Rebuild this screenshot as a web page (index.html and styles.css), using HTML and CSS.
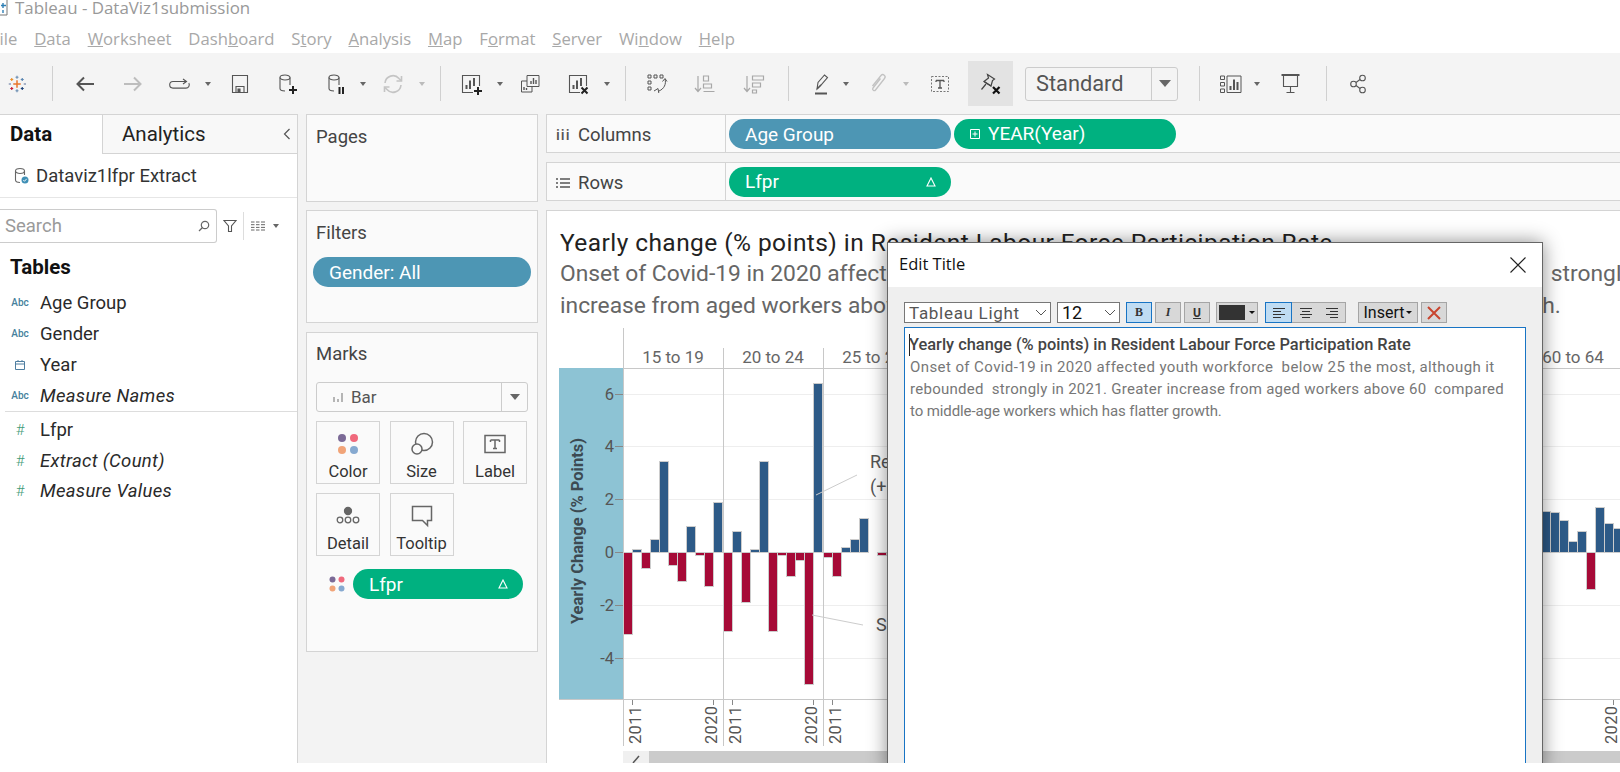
FILE: index.html
```html
<!DOCTYPE html>
<html lang="en">
<head>
    <meta charset="UTF-8">
    <title>Tableau - DataViz1submission</title>
    <link rel="stylesheet" href="styles.css">
</head>
<body>
<div class="app">
    <div class="titlebar">
        <svg class="app-icon" width="10" height="20" viewBox="0 0 10 20"><path d="M-4 2H7V18H-4" fill="#fff" stroke="#777"/><path d="M3 6v5M1 8.5h5M3 13v3" stroke="#2f7fb5" stroke-width="1.4"/></svg>
        <span>Tableau - DataViz1submission</span>
    </div>
    <ul class="menubar">
        <li class="menu-file">File</li>
        <li><u>D</u>ata</li>
        <li><u>W</u>orksheet</li>
        <li>Dash<u>b</u>oard</li>
        <li>S<u>t</u>ory</li>
        <li><u>A</u>nalysis</li>
        <li><u>M</u>ap</li>
        <li>F<u>o</u>rmat</li>
        <li><u>S</u>erver</li>
        <li>Wi<u>n</u>dow</li>
        <li><u>H</u>elp</li>
    </ul>

    <div class="toolbar">
        <div class="tool"><svg class="ico-logo" viewBox="0 0 24 24" fill="none" stroke-width="1.6"><path d="M12 7v10M7 12h10" stroke="#e8762b" stroke-width="2"/><path d="M12 1v4M10 3h4M12 19v4M10 21h4" stroke="#6d8fb3"/><path d="M5 4v4M3 6h4" stroke="#eb912b"/><path d="M19 4v4M17 6h4" stroke="#5b87b2"/><path d="M5 16v4M3 18h4" stroke="#c72037"/><path d="M19 16v4M17 18h4" stroke="#1f447a"/><path d="M1 12h3M21 12h3" stroke="#5b6f99"/></svg></div>
        <div class="tool"><i class="tb-sep"></i></div>
        <div class="tool"><svg class="ico" viewBox="0 0 24 24" fill="none" stroke="#555" stroke-width="2"><path d="M21 12H5M11 5.500 4.500 12l6.500 6.500"/></svg></div>
        <div class="tool"><svg class="ico" viewBox="0 0 24 24" fill="none" stroke="#bdbdbd" stroke-width="2"><path d="M3 12h16M13 5.500l6.500 6.500-6.500 6.500"/></svg></div>
        <div class="tool"><svg class="ico" viewBox="0 0 24 24" fill="none" stroke="#555" stroke-width="1.100"><path d="M19 9.500H6a3.300 3.300 0 0 0 0 6.600h13a3.300 3.300 0 0 0 2.800-5"/><path d="M16 7l3.500 2.500-3.500 2.500"/></svg></div>
        <div class="tool"><i class="caret"></i></div>
        <div class="tool"><svg class="ico" viewBox="0 0 24 24" fill="none" stroke="#555" stroke-width="1.100"><path d="M4.500 3.500h15v17h-15z"/><path d="M8 20.500v-6h8v6"/><path d="M10 17h2v3.500h-2z" fill="#555"/></svg></div>
        <div class="tool"><svg class="ico" viewBox="0 0 24 24" fill="none" stroke="#555" stroke-width="1.100"><ellipse cx="10" cy="5.500" rx="5" ry="2.500"/><path d="M5 5.500v11c0 1.500 2 2.500 5 2.500M15 5.500V13"/><path d="M18 14v8M14 18h8" stroke="#222" stroke-width="2"/></svg></div>
        <div class="tool"><svg class="ico" viewBox="0 0 24 24" fill="none" stroke="#555" stroke-width="1.100"><ellipse cx="10" cy="5.500" rx="5" ry="2.500"/><path d="M5 5.500v11c0 1.500 2 2.500 5 2.500M15 5.500V13"/><path d="M15.500 15v7M19 15v7" stroke="#222" stroke-width="2"/></svg></div>
        <div class="tool"><i class="caret"></i></div>
        <div class="tool"><svg class="ico" viewBox="0 0 24 24" fill="none" stroke="#c4c4c4" stroke-width="1.600"><path d="M4 11a8 8 0 0 1 14-4.500l2 2M20 13a8 8 0 0 1-14 4.500l-2-2"/><path d="M20.500 4v5h-5M3.500 20v-5h5"/></svg></div>
        <div class="tool"><i class="caret caret-off"></i></div>
        <div class="tool"><i class="tb-sep"></i></div>
        <div class="tool"><svg class="ico" viewBox="0 0 24 24" fill="none" stroke="#555" stroke-width="1.100"><path d="M14 20.500H3.500v-17h17V14"/><path d="M7.500 17v-4M11 17V8.500M15 14V6" stroke-width="2"/><path d="M19 15v8M15 19h8" stroke="#222" stroke-width="2"/></svg></div>
        <div class="tool"><i class="caret"></i></div>
        <div class="tool"><svg class="ico" viewBox="0 0 24 24" fill="none" stroke="#555" stroke-width="1"><path d="M9 3.500h12v11H9z" fill="#f4f4f4"/><path d="M9 9H3.500v11H14v-5"/><path d="M13 12V9M15.500 12V6M18 12V8M6 18v-3M8.500 18v-2" stroke-width="1.400"/></svg></div>
        <div class="tool"><svg class="ico" viewBox="0 0 24 24" fill="none" stroke="#555" stroke-width="1.100"><path d="M14 20.500H3.500v-17h17V14"/><path d="M7.500 17v-4M11 17V8.500M15 14V6" stroke-width="2"/><path d="M15.500 15.500l6 6M21.500 15.500l-6 6" stroke="#222" stroke-width="2"/></svg></div>
        <div class="tool"><i class="caret"></i></div>
        <div class="tool"><i class="tb-sep"></i></div>
        <div class="tool"><svg class="ico" viewBox="0 0 24 24" fill="none" stroke="#555" stroke-width="1"><path d="M3 3h3v3H3zM9 3h3v3H9zM15 3h3v3h-3zM3 9h3v3H3zM3 15h3v3H3z"/><path d="M20 7c1.500 5-1 10-6 12M9 19l4-2.500.8 4.500M17.500 9.500l2.500-3 2 3"/></svg></div>
        <div class="tool"><svg class="ico" viewBox="0 0 24 24" fill="none" stroke="#a8a8a8" stroke-width="1.200"><path d="M5 4v15M2 16l3 3.500L8 16"/><path d="M10.500 4h5v5h-5zM10.500 12h8v4h-8zM10.500 19.500h11"/></svg></div>
        <div class="tool"><svg class="ico" viewBox="0 0 24 24" fill="none" stroke="#a8a8a8" stroke-width="1.200"><path d="M5 4v15M2 16l3 3.500L8 16"/><path d="M10.500 4h11v4h-11zM10.500 11h8v4h-8zM10.500 18h4v3h-4z"/></svg></div>
        <div class="tool"><i class="tb-sep"></i></div>
        <div class="tool"><svg class="ico" viewBox="0 0 24 24" fill="none" stroke="#555" stroke-width="1.100"><path d="M8 17l1-6.500L15.500 3l3 2.500-6.500 7.500z"/><path d="M8 17l4-4"/><path d="M6 21.500h12" stroke-width="2"/></svg></div>
        <div class="tool"><i class="caret"></i></div>
        <div class="tool"><svg class="ico" viewBox="0 0 24 24" fill="none" stroke="#c2c2c2" stroke-width="1.300"><path d="M6.500 14 15 3.500c2-2.300 5.500.5 3.500 3L9.500 18c-1.300 1.600-3.800-.3-2.500-2l7.500-9.500"/></svg></div>
        <div class="tool"><i class="caret caret-off"></i></div>
        <div class="tool"><svg class="ico" viewBox="0 0 24 24" fill="none" stroke="#777" stroke-width="1"><path d="M3.500 4.500h17v15h-17z" stroke-dasharray="2 1.500"/><path d="M8 8.500h8M12 8.500V16M10 16h4M8 8.500V10M16 8.500V10" stroke="#555" stroke-width="1.300"/></svg></div>
        <div class="tool"><div class="pin-box"><svg class="ico" viewBox="0 0 24 24" fill="none" stroke="#444" stroke-width="1.200"><path d="M9.500 2.500l7 4.500-2 1.500-1.500 5.500-7-4.500 4.500-3.500z"/><path d="M6 9.500l7 4.500M8 12l-4.500 5.500"/><path d="M15 15l6.500 6.500M21.500 15 15 21.500" stroke="#111" stroke-width="2.200"/></svg></div></div>
        <div class="std-select"><span>Standard</span><b><i class="select-arrow"></i></b></div>
        <div class="tool"><i class="tb-sep"></i></div>
        <div class="tool"><svg class="ico" viewBox="0 0 24 24" fill="none" stroke="#555" stroke-width="1"><path d="M1.500 4h4v3.500h-4zM1.500 10.500h4V14h-4zM1.500 17h4v3.500h-4z"/><path d="M8 4h14v16.500H8z"/><path d="M11.500 18v-4M15 18V7.500M18.500 18V10" stroke-width="2"/></svg></div>
        <div class="tool"><i class="caret"></i></div>
        <div class="tool"><svg class="ico" viewBox="0 0 24 24" fill="none" stroke="#555" stroke-width="1.100"><path d="M1.500 3h18" stroke-width="2"/><path d="M3.500 3.500v11h14v-11M10.500 14.500V20M6.500 20.500h8"/></svg></div>
        <div class="tool"><i class="tb-sep"></i></div>
        <div class="tool"><svg class="ico" viewBox="0 0 24 24" fill="none" stroke="#555" stroke-width="1.100"><circle cx="6.500" cy="12" r="2.800"/><circle cx="15.500" cy="6" r="2.800"/><circle cx="15.500" cy="18" r="2.800"/><path d="M9 10.500l4-3M9 13.500l4 3"/></svg></div>
    </div>

    <div class="workspace">
        <div class="data-panel">
            <div class="tabs">
                <div class="tab-data">Data</div>
                <div class="tab-analytics">Analytics<svg width="8" height="12" viewBox="0 0 8 12" fill="none" stroke="#555" stroke-width="1.200"><path d="M6.500 1 1.500 6l5 5"/></svg></div>
            </div>
            <div class="source">
                <svg width="16" height="18" viewBox="0 0 16 18" fill="none" stroke="#666" stroke-width="1.100"><ellipse cx="6" cy="4" rx="4.500" ry="2.500"/><path d="M1.500 4v9c0 1.500 2 2.500 4.500 2.500M10.500 4v4"/><circle cx="11" cy="13" r="3.500" fill="#3f8fb5" stroke="none"/><path d="M9.300 13l1.200 1.300 2.200-2.500" stroke="#fff" stroke-width=".9"/></svg>
                <span>Dataviz1lfpr Extract</span>
            </div>
            <div class="search-row">
                <div class="search-box"><span>Search</span><svg width="12" height="12" viewBox="0 0 12 12" fill="none" stroke="#666" stroke-width="1.200"><circle cx="7" cy="5" r="3.700"/><path d="M4.500 7.500 1 11"/></svg></div>
                <svg class="search-filter" width="14" height="14" viewBox="0 0 14 14" fill="none" stroke="#555" stroke-width="1.100"><path d="M1 1.500h12L8.500 7v5.500h-3V7z"/></svg>
                <i class="search-sep"></i>
                <svg class="search-list" width="14" height="10" viewBox="0 0 14 10" fill="none" stroke="#666" stroke-width="1"><path d="M0 1h3.500M0 3.700h3.500M0 6.400h3.500M0 9h3.500M5 1h3.500M5 3.700h3.500M5 6.400h3.500M5 9h3.500M10 1h4M10 3.700h4M10 6.400h4M10 9h4"/></svg>
                <i class="caret caret-dark"></i>
            </div>
            <h3 class="tables-head">Tables</h3>
            <ul class="fields">
                <li><span class="f-abc">Abc</span>Age Group</li>
                <li><span class="f-abc">Abc</span>Gender</li>
                <li><span class="f-ico"><svg width="12" height="12" viewBox="0 0 12 12" fill="none" stroke="#4e7ea0"><path d="M1.500 2.500h9v8h-9zM1.500 5h9M4 1v2M8 1v2"/></svg></span>Year</li>
                <li class="f-calc"><span class="f-abc">Abc</span>Measure Names</li>
            </ul>
            <ul class="fields fields-num">
                <li><span class="f-num">#</span>Lfpr</li>
                <li class="f-calc"><span class="f-num">#</span>Extract (Count)</li>
                <li class="f-calc"><span class="f-num">#</span>Measure Values</li>
            </ul>
        </div>

        <div class="cards">
            <div class="card card-pages"><div class="card-title">Pages</div></div>
            <div class="card card-filters">
                <div class="card-title">Filters</div>
                <div class="pill pill-blue filter-pill">Gender: All</div>
            </div>
            <div class="card card-marks">
                <div class="card-title">Marks</div>
                <div class="mark-select">
                    <svg width="12" height="10" viewBox="0 0 12 10" fill="#b5b5b5"><path d="M1 5h2v5H1zM5 7h2v3H5zM9 1h2v9H9z"/></svg>
                    <span>Bar</span>
                    <b><i class="select-arrow"></i></b>
                </div>
                <div class="mark-grid">
                    <div class="mark-btn">
                        <svg width="24" height="24" viewBox="0 0 24 24"><circle cx="6" cy="6" r="4" fill="#7b6a96"/><circle cx="18" cy="6" r="4" fill="#f0697c"/><circle cx="6" cy="18" r="4" fill="#f1a478"/><circle cx="18" cy="18" r="4" fill="#86a9d0"/></svg>
                        <span>Color</span>
                    </div>
                    <div class="mark-btn">
                        <svg width="24" height="24" viewBox="0 0 24 24" fill="none" stroke="#666" stroke-width="1.500"><circle cx="14" cy="10" r="8.500"/><circle cx="7" cy="17" r="5" fill="#fafafa"/></svg>
                        <span>Size</span>
                    </div>
                    <div class="mark-btn">
                        <svg width="24" height="24" viewBox="0 0 24 24" fill="none" stroke="#666" stroke-width="1.500"><path d="M2 3.500h20v17H2z"/><path d="M7.500 8h9M12 8v8.500M10 16.500h4M7.500 8v2M16.500 8v2"/></svg>
                        <span>Label</span>
                    </div>
                    <div class="mark-btn">
                        <svg width="24" height="24" viewBox="0 0 24 24" fill="none" stroke="#666" stroke-width="1.300"><circle cx="12" cy="7" r="3.500" fill="#666"/><circle cx="4" cy="16" r="2.800"/><circle cx="12" cy="16" r="2.800"/><circle cx="20" cy="16" r="2.800"/></svg>
                        <span>Detail</span>
                    </div>
                    <div class="mark-btn">
                        <svg width="24" height="24" viewBox="0 0 24 24" fill="none" stroke="#666" stroke-width="1.500"><path d="M2.500 2.500h19v14h-4v5l-5-5h-10z"/></svg>
                        <span>Tooltip</span>
                    </div>
                </div>
                <div class="mark-pill-row">
                    <svg width="16" height="16" viewBox="0 0 16 16"><circle cx="3.500" cy="3.500" r="3" fill="#7b6a96"/><circle cx="12.500" cy="3.500" r="3" fill="#f0697c"/><circle cx="3.500" cy="12.500" r="3" fill="#f1a478"/><circle cx="12.500" cy="12.500" r="3" fill="#86a9d0"/></svg>
                    <div class="pill pill-green pill-delta">Lfpr<svg width="10" height="10" viewBox="0 0 10 10" fill="none" stroke="#fff" stroke-width="1.100"><path d="M5 1 9 9H1z"/></svg></div>
                </div>
            </div>
        </div>

        <div class="main">
            <div class="shelf">
                <div class="shelf-label"><span class="shelf-ico">iii</span>Columns</div>
                <div class="shelf-pills">
                    <div class="pill pill-blue pill-age">Age Group</div>
                    <div class="pill pill-green pill-year"><svg width="10" height="10" viewBox="0 0 10 10" fill="none" stroke="#fff"><path d="M.5.500h9v9h-9zM5 2.500v5M2.500 5h5"/></svg>YEAR(Year)</div>
                </div>
            </div>
            <div class="shelf">
                <div class="shelf-label"><svg class="shelf-svg" width="14" height="12" viewBox="0 0 14 12" stroke="#555" stroke-width="1.500"><path d="M0 2h2M4 2h10M0 6h2M4 6h10M0 10h2M4 10h10"/></svg>Rows</div>
                <div class="shelf-pills">
                    <div class="pill pill-green pill-delta pill-age">Lfpr<svg width="10" height="10" viewBox="0 0 10 10" fill="none" stroke="#fff" stroke-width="1.100"><path d="M5 1 9 9H1z"/></svg></div>
                </div>
            </div>
            <div class="viz">
                <div class="viz-head">
                    <div class="viz-title">Yearly change (% points) in Resident Labour Force Participation Rate</div>
                    <div class="viz-sub">Onset of Covid-19 in 2020 affected youth workforce  <span class="sub-wide">below 25 the most, although it rebounded</span>  strongly in 2021. Greater</div>
                    <div class="viz-sub">increase from aged workers above <span class="sub-wider">60  compared to middle-age workers which has flatter gro</span>wth.</div>
                </div>
                <svg class="chart" width="1073" height="443" viewBox="547 320 1073 443">
                    <rect class="axis-bg" x="559" y="368" width="64" height="331"/>
                    <text class="axis-title" transform="rotate(-90 583 531)" x="583" y="531">Yearly Change (% Points)</text>

                    <g class="grid">
                        <path d="M623 394.500H1620M623 446.500H1620M623 499.500H1620M623 605.500H1620M623 658.500H1620"/>
                    </g>
                    <g class="rules">
                        <path d="M623.500 328V746M723.500 348V746M823.500 348V746M623 368.500H1620M559 699.500H1620"/>
                    </g>
                    <g class="ticks">
                        <path d="M615 394.500h8M615 446.500h8M615 499.500h8M615 552.500h8M615 605.500h8M615 658.500h8"/>
                        <path d="M632.500 700v5M713.500 700v5M732.500 700v5M813.500 700v5M832.500 700v5M1613.500 700v5"/>
                    </g>
                    <g class="axis-num">
                        <text x="614" y="400">6</text>
                        <text x="614" y="452">4</text>
                        <text x="614" y="505">2</text>
                        <text x="614" y="558">0</text>
                        <text x="614" y="611">-2</text>
                        <text x="614" y="664">-4</text>
                    </g>
                    <g class="head-label">
                        <text x="673" y="363">15 to 19</text>
                        <text x="773" y="363">20 to 24</text>
                        <text x="873" y="363">25 to 29</text>
                        <text x="1573" y="363">60 to 64</text>
                    </g>

                    <g class="bars-neg">
                        <rect x="623.500" y="552.500" width="9" height="82"/>
                        <rect x="641.500" y="552.500" width="9" height="16"/>
                        <rect x="668.500" y="552.500" width="9" height="13"/>
                        <rect x="677.500" y="552.500" width="9" height="29"/>
                        <rect x="695.500" y="552.500" width="9" height="3"/>
                        <rect x="704.500" y="552.500" width="9" height="34"/>
                        <rect x="723.500" y="552.500" width="9" height="79"/>
                        <rect x="741.500" y="552.500" width="9" height="50"/>
                        <rect x="768.500" y="552.500" width="9" height="79"/>
                        <rect x="777.500" y="552.500" width="9" height="3"/>
                        <rect x="786.500" y="552.500" width="9" height="24"/>
                        <rect x="795.500" y="552.500" width="9" height="8"/>
                        <rect x="804.500" y="552.500" width="9" height="132"/>
                        <rect x="823.500" y="552.500" width="9" height="5"/>
                        <rect x="832.500" y="552.500" width="9" height="24"/>
                        <rect x="877.500" y="552.500" width="9" height="3"/>
                        <rect x="1586.500" y="552.500" width="9" height="37"/>
                    </g>
                    <g class="bars-pos">
                        <rect x="632.500" y="549.500" width="9" height="3"/>
                        <rect x="650.500" y="539.500" width="9" height="13"/>
                        <rect x="659.500" y="461.500" width="9" height="91"/>
                        <rect x="686.500" y="526.500" width="9" height="26"/>
                        <rect x="713.500" y="502.500" width="9" height="50"/>
                        <rect x="732.500" y="531.500" width="9" height="21"/>
                        <rect x="750.500" y="549.500" width="9" height="3"/>
                        <rect x="759.500" y="461.500" width="9" height="91"/>
                        <rect x="813.500" y="383.500" width="9" height="169"/>
                        <rect x="841.500" y="547.500" width="9" height="5"/>
                        <rect x="850.500" y="539.500" width="9" height="13"/>
                        <rect x="859.500" y="518.500" width="9" height="34"/>
                        <rect x="1541.500" y="511.500" width="9" height="41"/>
                        <rect x="1550.500" y="512.500" width="9" height="40"/>
                        <rect x="1559.500" y="520.500" width="9" height="32"/>
                        <rect x="1568.500" y="541.500" width="9" height="11"/>
                        <rect x="1577.500" y="531.500" width="9" height="21"/>
                        <rect x="1595.500" y="507.500" width="9" height="45"/>
                        <rect x="1604.500" y="523.500" width="9" height="29"/>
                        <rect x="1613.500" y="528.500" width="9" height="24"/>
                    </g>

                    <path class="callout" d="M816 495 857 475M812 615 863 625"/>
                    <g class="callout-text">
                        <text x="870" y="468">Rec</text>
                        <text x="870" y="493">(+6</text>
                        <text x="876" y="631">Shar</text>
                    </g>

                    <g class="year-label">
                        <text transform="rotate(-90 641 744)" x="641" y="744">2011</text>
                        <text transform="rotate(-90 717 744)" x="717" y="744">2020</text>
                        <text transform="rotate(-90 741 744)" x="741" y="744">2011</text>
                        <text transform="rotate(-90 817 744)" x="817" y="744">2020</text>
                        <text transform="rotate(-90 841 744)" x="841" y="744">2011</text>
                        <text transform="rotate(-90 1617 744)" x="1617" y="744">2020</text>
                    </g>

                    <rect class="scroll-btn" x="623" y="751" width="26" height="12"/>
                    <rect class="scroll-track" x="649" y="751" width="971" height="12"/>
                    <path class="scroll-arrow" d="M639 756l-6 7"/>
                </svg>
            </div>
        </div>
    </div>

    <div class="dialog">
        <div class="dialog-head">
            <span>Edit Title</span>
            <svg width="16" height="16" viewBox="0 0 16 16" stroke="#222" stroke-width="1.100"><path d="M.5.500l15 15M15.500.500l-15 15"/></svg>
        </div>
        <div class="dialog-body">
            <div class="fmt-bar">
                <div class="fmt-select fmt-font">Tableau Light<svg width="12" height="7" viewBox="0 0 12 7" fill="none" stroke="#555"><path d="M1 1l5 5 5-5"/></svg></div>
                <div class="fmt-select fmt-size">12<svg width="12" height="7" viewBox="0 0 12 7" fill="none" stroke="#555"><path d="M1 1l5 5 5-5"/></svg></div>
                <div class="fmt-btn fmt-on fmt-b">B</div>
                <div class="fmt-btn fmt-i">I</div>
                <div class="fmt-btn fmt-u">U</div>
                <div class="fmt-btn fmt-color"><i class="swatch"></i><i class="fmt-caret"></i></div>
                <div class="fmt-align">
                    <div class="fmt-btn fmt-on"><svg width="12" height="10" viewBox="0 0 12 10" stroke="#333"><path d="M0 .5h12M0 3.500h8M0 6.500h12M0 9.500h8"/></svg></div>
                    <div class="fmt-btn"><svg width="12" height="10" viewBox="0 0 12 10" stroke="#333"><path d="M0 .5h12M2 3.500h8M0 6.500h12M2 9.500h8"/></svg></div>
                    <div class="fmt-btn"><svg width="12" height="10" viewBox="0 0 12 10" stroke="#333"><path d="M0 .5h12M4 3.500h8M0 6.500h12M4 9.500h8"/></svg></div>
                </div>
                <div class="fmt-btn fmt-insert">Insert<i class="fmt-caret"></i></div>
                <div class="fmt-btn fmt-x"><svg width="14" height="14" viewBox="0 0 14 14" stroke="#c8452f" stroke-width="2"><path d="M1 1l12 12M13 1 1 13"/></svg></div>
            </div>
            <div class="editor">
                <div class="ed-title">Yearly change (% points) in Resident Labour Force Participation Rate</div>
                <div class="ed-line ed-l1">Onset of Covid-19 in 2020 affected youth workforce  below 25 the most, although it</div>
                <div class="ed-line ed-l2">rebounded  strongly in 2021. Greater increase from aged workers above 60  compared</div>
                <div class="ed-line ed-l3">to middle-age workers which has flatter growth.</div>
            </div>
        </div>
    </div>
</div>
</body>
</html>
```

FILE: styles.css
```css
*{
    margin: 0;
    padding: 0;
    box-sizing: border-box;
}
body{
    background: #fff;
    font-family: Roboto, "Noto Sans", sans-serif;
    color: #333;
    overflow: hidden;
}
ul{
    list-style: none;
}
.app{
    position: relative;
    width: 1620px;
    height: 763px;
    overflow: hidden;
    display: flex;
    flex-direction: column;
}

/* window title + menu */
.titlebar{
    height: 28px;
    display: flex;
    align-items: flex-start;
    font-family: "Open Sans", sans-serif;
    font-size: 16.900px;
    line-height: 15px;
    color: #999;
}
.app-icon{
    margin: -3px 5px 0 0;
}
.menubar{
    height: 25px;
    display: flex;
    gap: 16.800px;
    font-family: "Open Sans", sans-serif;
    font-size: 16.700px;
    line-height: 22px;
    color: #a8a8a8;
}
.menu-file{
    margin-left: -9px;
}

/* toolbar, every column runs from one icon centre to the next */
.toolbar{
    height: 61px;
    background: #f4f4f4;
    padding-left: 17px;
    display: grid;
    grid-template-columns: 35px 33px 48px 46px 29px 32px 47px 49px 27px 30px 29px 18px 31px 29px 30px 48px 29px 18px 32px 48px 49px 34px 33px 25px 32px 28px 34px 50px 35px 174px 32px 26px 35px 34px 33px auto;
    align-items: center;
}
.tool{
    width: 0;
    display: flex;
    justify-content: center;
    align-items: center;
}
.ico{
    width: 24px;
    height: 24px;
    flex: none;
}
.ico-logo{
    width: 18px;
    height: 18px;
    flex: none;
}
.tb-sep{
    flex: none;
    width: 1px;
    height: 35px;
    background: #d0d0d0;
}
.caret{
    flex: none;
    width: 0;
    height: 0;
    border-left: 3.500px solid transparent;
    border-right: 3.500px solid transparent;
    border-top: 4px solid #666;
}
.caret-off{
    border-top-color: #bbb;
}
.pin-box{
    flex: none;
    width: 45px;
    height: 45px;
    background: #e3e3e3;
    display: flex;
    align-items: center;
    justify-content: center;
}
.std-select{
    width: 153px;
    height: 34px;
    border: 1px solid #ccc;
    border-radius: 3px;
    display: flex;
    font-size: 21.800px;
    line-height: 32px;
    color: #555;
}
.std-select span{
    flex: 1;
    padding-left: 10px;
}
.std-select b{
    width: 26px;
    border-left: 1px solid #ccc;
    display: flex;
    align-items: center;
    justify-content: center;
}
.select-arrow{
    width: 0;
    height: 0;
    border-left: 6px solid transparent;
    border-right: 6px solid transparent;
    border-top: 7px solid #666;
}

/* panels */
.workspace{
    flex: 1;
    min-height: 0;
    display: flex;
    background: #f3f3f3;
}
.data-panel{
    width: 298px;
    background: #fff;
    border-right: 1px solid #d4d4d4;
    border-top: 1px solid #d4d4d4;
}
.tabs{
    height: 39px;
    display: flex;
    font-size: 20.500px;
    line-height: 38px;
    color: #222;
}
.tab-data{
    width: 102px;
    padding-left: 10px;
    font-weight: 700;
    color: #111;
}
.tab-analytics{
    flex: 1;
    background: #f8f8f8;
    border-left: 1px solid #d4d4d4;
    border-bottom: 1px solid #d4d4d4;
    padding-left: 19px;
    display: flex;
    justify-content: space-between;
    align-items: center;
}
.tab-analytics svg{
    margin-right: 6px;
}
.source{
    height: 44px;
    border-bottom: 1px solid #e6e6e6;
    display: flex;
    align-items: center;
    padding-left: 14px;
    gap: 6px;
    font-size: 18.500px;
    color: #333;
}
.search-row{
    margin-top: 11px;
    height: 34px;
    display: flex;
    align-items: center;
}
.search-box{
    width: 217px;
    height: 34px;
    border: 1px solid #ccc;
    border-left: 0;
    border-radius: 0 3px 3px 0;
    display: flex;
    align-items: center;
    justify-content: space-between;
    padding: 0 6px 0 5px;
    font-size: 18.500px;
    color: #9a9a9a;
}
.search-filter{
    margin-left: 6px;
}
.search-sep{
    width: 1px;
    height: 28px;
    background: #ddd;
    margin-left: 6px;
}
.search-list{
    margin-left: 7px;
}
.caret-dark{
    margin-left: 8px;
}
.tables-head{
    margin-top: 12px;
    height: 32px;
    padding-left: 10px;
    font-size: 20.500px;
    font-weight: 700;
    line-height: 24px;
    color: #111;
}
.fields li{
    height: 31px;
    display: flex;
    align-items: center;
    font-size: 18.500px;
    color: #2a2a2a;
}
.fields-num{
    border-top: 1px solid #ddd;
    padding-top: 3px;
    margin-left: 5px;
}
.fields-num li{
    height: 30.500px;
    margin-left: -5px;
}
.f-calc{
    font-style: italic;
    letter-spacing: 0.300px;
}
.f-abc, .f-num, .f-ico{
    width: 40px;
    flex: none;
    text-align: center;
    font-style: normal;
    letter-spacing: 0;
}
.f-abc{
    font-size: 10px;
    font-weight: 500;
    color: #45809c;
}
.f-ico{
    display: flex;
    justify-content: center;
}
.f-num{
    font-size: 15px;
    font-weight: 300;
    color: #3f9a78;
}

.cards{
    width: 232px;
    margin-left: 8px;
    display: flex;
    flex-direction: column;
}
.card{
    background: #fafafa;
    border: 1px solid #d4d4d4;
    padding: 0 6px;
}
.card-title{
    padding-left: 3px;
    font-size: 18.500px;
    color: #444;
}
.card-pages{
    height: 88px;
    padding-top: 11px;
}
.card-filters{
    margin-top: 8px;
    height: 113px;
    padding-top: 11px;
}
.filter-pill{
    margin-top: 13px;
    padding-left: 16px;
}
.card-marks{
    margin-top: 9px;
    height: 320px;
    padding: 10px 9px 0;
}
.card-marks .card-title{
    padding-left: 0;
}
.pill{
    height: 30px;
    border-radius: 15px;
    color: #fff;
    font-size: 19px;
    line-height: 32px;
}
.pill-blue{
    background: #4d96b4;
}
.pill-green{
    background: #00b180;
}
.pill-delta{
    display: flex;
    justify-content: space-between;
    align-items: center;
    padding: 0 15px 0 16px;
    line-height: 30px;
}
.mark-select{
    margin-top: 17px;
    height: 30px;
    border: 1px solid #ccc;
    border-radius: 3px;
    background: #fafafa;
    display: flex;
    align-items: center;
    font-size: 17px;
    color: #555;
}
.mark-select svg{
    margin-left: 15px;
}
.mark-select span{
    flex: 1;
    padding-left: 7px;
}
.mark-select b{
    width: 26px;
    height: 100%;
    border-left: 1px solid #ccc;
    display: flex;
    align-items: center;
    justify-content: center;
}
.mark-select .select-arrow{
    border-left-width: 5px;
    border-right-width: 5px;
    border-top-width: 6px;
}
.mark-grid{
    margin-top: 9px;
    display: grid;
    grid-template-columns: repeat(3, 64px);
    grid-auto-rows: 63px;
    gap: 9px 9.500px;
}
.mark-btn{
    border: 1px solid #d4d4d4;
    display: flex;
    flex-direction: column;
    align-items: center;
    padding-top: 10px;
    gap: 6px;
    font-size: 16.500px;
    line-height: 20px;
    color: #333;
}
.mark-pill-row{
    margin-top: 13px;
    padding-left: 13px;
    display: flex;
    align-items: center;
    gap: 8px;
}
.mark-pill-row .pill{
    width: 170px;
    padding-top: 2px;
}
.mark-pill-row .pill svg{
    margin-top: -2px;
}

.main{
    flex: 1;
    margin-left: 8px;
    min-width: 0;
}
.shelf{
    height: 39px;
    margin-bottom: 9px;
    background: #fafafa;
    border: 1px solid #d4d4d4;
    border-right: 0;
    display: flex;
}
.shelf-label{
    width: 179px;
    border-right: 1px solid #d4d4d4;
    padding: 3px 0 0 9px;
    display: flex;
    align-items: center;
    font-size: 18.500px;
    color: #444;
}
.shelf-ico{
    width: 22px;
    font-size: 15px;
    font-weight: 500;
    letter-spacing: 1px;
    color: #555;
}
.shelf-svg{
    margin-right: 8px;
}
.shelf-pills{
    padding: 4px 0 0 3px;
    display: flex;
    gap: 3px;
}
.pill-age{
    width: 222px;
    padding-left: 16px;
}
.pill-year{
    width: 222px;
    padding-left: 16px;
    display: flex;
    align-items: center;
    gap: 8px;
}

.viz{
    height: 553px;
    background: #fff;
    border: 1px solid #d4d4d4;
    border-right: 0;
    border-bottom: 0;
}
.viz-head{
    height: 109px;
    padding: 16px 0 0 13px;
    overflow: hidden;
}
.viz-title{
    font-size: 24.500px;
    letter-spacing: 0.430px;
    line-height: 31px;
    color: #222;
    white-space: pre;
}
.viz-sub{
    font-size: 22.800px;
    line-height: 32px;
    color: #666;
    white-space: pre;
}
/* these stretches sit under the dialog, they only push the ends of the lines out */
.sub-wide{
    letter-spacing: 0.700px;
}
.sub-wider{
    letter-spacing: 0.360px;
}
.chart{
    display: block;
}
.axis-bg{
    fill: #8dc3d4;
}
.axis-title{
    font-size: 16.500px;
    font-weight: 700;
    fill: #3c4a52;
    text-anchor: middle;
}
.grid path{
    stroke: #eee;
    fill: none;
}
.rules path{
    stroke: #c8c8c8;
    fill: none;
}
.ticks path{
    stroke: #888;
    fill: none;
}
.axis-num text{
    font-size: 16.500px;
    fill: #555;
    text-anchor: end;
}
.head-label text{
    font-size: 17px;
    fill: #666;
    text-anchor: middle;
}
.bars-neg rect{
    fill: #a60a37;
    stroke: #ccc;
}
.bars-pos rect{
    fill: #2d5a87;
    stroke: #ccc;
}
.callout{
    stroke: #ccc;
    fill: none;
}
.callout-text text{
    font-size: 18px;
    fill: #555;
}
.year-label text{
    font-size: 16.500px;
    letter-spacing: 0.300px;
    fill: #555;
}
.scroll-btn{
    fill: #f0f0f0;
}
.scroll-track{
    fill: #cbcbcb;
}
.scroll-arrow{
    stroke: #555;
    stroke-width: 1.500;
    fill: none;
}

/* Edit Title dialog */
.dialog{
    position: absolute;
    left: 887px;
    top: 242px;
    width: 656px;
    height: 530px;
    border: 1px solid #666;
    background: #efefef;
    box-shadow: 0 0 18px rgba(0,0,0,0.45);
}
.dialog-head{
    height: 44px;
    background: #fff;
    display: flex;
    align-items: center;
    justify-content: space-between;
    padding: 0 16px 3px 11px;
    font-family: "Open Sans", sans-serif;
    font-size: 16.500px;
    color: #111;
}
.dialog-head svg{
    margin-top: 3px;
}
.dialog-body{
    padding: 15px 16px 0 16px;
}
.fmt-bar{
    height: 21px;
    display: flex;
}
.fmt-select{
    height: 21px;
    border: 1px solid #777;
    background: #fff;
    display: flex;
    align-items: center;
    justify-content: space-between;
    padding: 0 3px 0 4px;
    font-size: 17px;
    color: #555;
}
.fmt-font{
    width: 147px;
    margin-right: 6px;
    letter-spacing: 0.700px;
}
.fmt-size{
    width: 63px;
    margin-right: 6px;
    color: #111;
    font-size: 18px;
}
.fmt-btn{
    height: 21px;
    width: 26px;
    border: 1px solid #a5a5a5;
    background: #d8d8d8;
    display: flex;
    align-items: center;
    justify-content: center;
    font-size: 12px;
    font-weight: 700;
    color: #333;
    margin-right: 3px;
    flex: none;
}
.fmt-on{
    background: #bfdcf3;
    border-color: #1874c4;
}
.fmt-b{
    font-family: "Liberation Serif", serif;
}
.fmt-i{
    font-family: "Liberation Serif", serif;
    font-style: italic;
}
.fmt-u{
    text-decoration: underline;
}
.fmt-color{
    width: 42px;
    margin-left: 3px;
    gap: 4px;
}
.swatch{
    width: 26px;
    height: 15px;
    background: #333;
}
.fmt-caret{
    width: 0;
    height: 0;
    border-left: 3px solid transparent;
    border-right: 3px solid transparent;
    border-top: 3px solid #111;
}
.fmt-align{
    display: flex;
    margin-left: 4px;
    margin-right: 12px;
}
.fmt-align .fmt-btn{
    width: 27px;
    margin-right: 0;
    border-left: 0;
    border-right: 0;
}
.fmt-align .fmt-on{
    border: 1px solid #1874c4;
}
.fmt-align .fmt-btn:last-child{
    border-right: 1px solid #a5a5a5;
}
.fmt-insert{
    width: 60px;
    gap: 2px;
    font-size: 16px;
    font-weight: 400;
    color: #111;
}
.fmt-x{
    margin-right: 0;
}
.editor{
    margin-top: 4px;
    height: 450px;
    border: 1px solid #1874c4;
    background: #fff;
    padding: 6px 0 0 4px;
}
.ed-title{
    font-size: 16.400px;
    font-weight: 500;
    line-height: 22px;
    color: #444;
    border-left: 1px solid #222;
    text-indent: -1px;
    white-space: pre;
}
.ed-line{
    font-size: 15px;
    line-height: 22px;
    color: #777;
    white-space: pre;
    padding-left: 1px;
}
.ed-l1{
    letter-spacing: 0.410px;
}
.ed-l2{
    letter-spacing: 0.280px;
}
.ed-l3{
    letter-spacing: -0.100px;
}
```
